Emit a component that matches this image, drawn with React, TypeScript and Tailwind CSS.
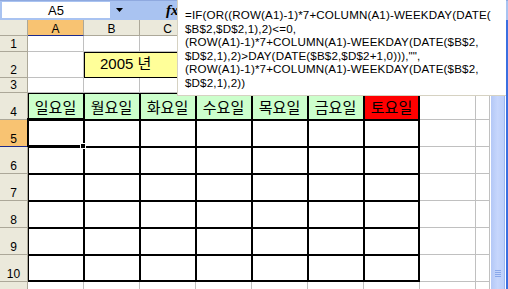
import React from "react";

const days = ["일요일", "월요일", "화요일", "수요일", "목요일", "금요일", "토요일"];
const cols = ["A", "B", "C", "D", "E", "F", "G", "H", "I"];

const formula = [
  "=IF(OR((ROW(A1)-1)*7+COLUMN(A1)-WEEKDAY(DATE(",
  "$B$2,$D$2,1),2)<=0,",
  "(ROW(A1)-1)*7+COLUMN(A1)-WEEKDAY(DATE($B$2,",
  "$D$2,1),2)>DAY(DATE($B$2,$D$2+1,0))),\"\",",
  "(ROW(A1)-1)*7+COLUMN(A1)-WEEKDAY(DATE($B$2,",
  "$D$2,1),2))",
];

const gridCell = "border-r border-b border-[#c0c0c0] bg-white";
const rowHead =
  "bg-[#ebe9db] border-r border-b border-[#aca899] flex items-end justify-center text-[12px] leading-none pb-[1px] text-black";

// black-ruled cells of the calendar block (A4:G10)
function tableCls(c: number, r: number) {
  const lastCol = c === 6;
  const lastRow = r === 10;
  if (lastCol && lastRow) return "border-r border-b border-black shadow-[inset_1px_1px_0_#000,inset_-1px_-1px_0_#000]";
  if (lastCol) return "border-r border-b border-black shadow-[inset_1px_1px_0_#000,inset_-1px_0_0_#000]";
  if (lastRow) return "border-r border-b border-black shadow-[inset_1px_1px_0_#000,inset_0_-1px_0_#000]";
  return "border-r border-b border-black shadow-[inset_1px_1px_0_#000]";
}

function FormulaBar() {
  return (
    <div className="h-[20px] bg-[#a9c3f1] border-t border-[#8fa9df] flex items-start">
      <div className="ml-[2px] mt-[1px] w-[108px] h-[16px] bg-white flex items-center justify-center text-[13px] leading-none text-black">
        A5
      </div>
      <div className="w-[18px] h-[17px] flex items-center justify-center">
        <svg width="7" height="4" viewBox="0 0 7 4">
          <polygon points="0,0 7,0 3.5,4" fill="#000" />
        </svg>
      </div>
      <div className="ml-[38px] mt-[2px] font-['Liberation_Serif'] italic font-bold text-[15px] leading-none text-black">
        fx
      </div>
    </div>
  );
}

function Scrollbar() {
  return (
    <div className="w-[18px] flex">
      <div className="w-[1px] bg-white" />
      <div className="flex-1 flex flex-col items-center justify-end pb-[12px] bg-gradient-to-r from-[#b4c8f6] via-[#c6d6fc] to-[#bccffa] border-r border-[#9db7ef]">
        <div className="flex flex-col gap-[1px]">
          <div className="w-[6px] h-[1px] bg-[#8aa8ea]" />
          <div className="w-[6px] h-[1px] bg-[#8aa8ea]" />
          <div className="w-[6px] h-[1px] bg-[#8aa8ea]" />
          <div className="w-[6px] h-[1px] bg-[#8aa8ea]" />
        </div>
      </div>
      <div className="w-[1px] bg-white" />
      <div className="w-[2px] bg-[#3b6fe0]" />
    </div>
  );
}

function Sheet() {
  const cells: React.ReactNode[] = [];

  // header row (letters from D on sit under the formula box)
  cells.push(<div key="corner" className="bg-[#ebe9db] border-r border-b border-[#aca899]" />);
  cols.forEach((c, i) => {
    cells.push(
      <div
        key={"h" + c}
        className={
          i === 0
            ? "bg-[#f8c372] border-r border-[#aca899] border-b border-b-[#1c2a8c] flex items-center justify-center pt-[2px] text-[12px] leading-none"
            : "bg-[#ebe9db] border-r border-b border-[#aca899] flex items-center justify-center pt-[2px] text-[12px] leading-none"
        }
      >
        {i < 3 ? c : null}
      </div>
    );
  });

  // rows 1..11
  for (let r = 1; r <= 11; r++) {
    cells.push(
      <div
        key={"r" + r}
        className={
          r === 5
            ? "bg-[#f8c372] border-r border-[#aca899] border-b border-b-[#1c2a8c] flex items-end justify-center text-[12px] leading-none pb-[1px] text-black"
            : rowHead
        }
      >
        {r}
      </div>
    );
    for (let c = 0; c < cols.length; c++) {
      const key = cols[c] + r;
      if (r === 2 && c === 1) {
        cells.push(
          <div
            key={key}
            className="col-span-2 bg-[#ffff99] border-r border-b border-black shadow-[inset_1px_1px_0_#000] flex items-end pl-[16px] pb-[6px] text-[15px] leading-none text-black"
          >
            2005 년
          </div>
        );
        continue;
      }
      if (r === 2 && c === 2) continue;
      if (r >= 4 && r <= 10 && c <= 6) {
        if (r === 4) {
          cells.push(
            <div
              key={key}
              className={
                (c === 6 ? "bg-[#ff0000] " : "bg-[#ccffcc] ") +
                tableCls(c, r) +
                " flex items-center justify-center font-['Noto_Sans_CJK_KR',sans-serif] text-[15px] leading-none text-black"
              }
            >
              {days[c]}
            </div>
          );
        } else {
          cells.push(<div key={key} className={"bg-white " + tableCls(c, r)} />);
        }
        continue;
      }
      cells.push(<div key={key} className={gridCell} />);
    }
  }

  return (
    <div className="relative">
      <div className="grid grid-cols-[28px_repeat(8,56px)_14px] grid-rows-[16px_16px_26px_15px_repeat(8,27px)]">
        {cells}
      </div>
      {/* active cell A5 */}
      <div className="absolute left-[27px] top-[98px] w-[58px] h-[29px] border-2 border-black" />
      <div className="absolute left-[80px] top-[123px] w-[6px] h-[6px] bg-black border border-white" />
    </div>
  );
}

export default function App() {
  return (
    <div className="w-[508px] h-[289px] relative overflow-hidden bg-white font-['Liberation_Sans','Noto_Sans_CJK_KR',sans-serif] text-black">
      <FormulaBar />
      <div className="flex h-[269px] overflow-hidden">
        <Sheet />
        <Scrollbar />
      </div>
      {/* expanded formula text box */}
      <div className="absolute left-[177px] top-0 w-[329px] h-[96px] bg-white border-l border-b border-[#d6d2c2] pl-[7px] pt-[8px] text-[11.6px] leading-[13.5px] tracking-[0.15px] whitespace-pre text-black">
        {formula.map((l, i) => (
          <div key={i}>{l}</div>
        ))}
      </div>
    </div>
  );
}
